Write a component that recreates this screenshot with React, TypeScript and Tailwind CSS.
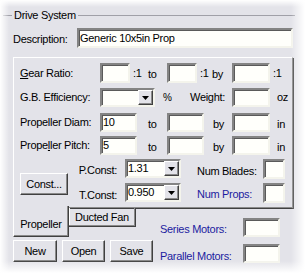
import React from "react";

const sunken =
  "bg-[#fffffb] border-2 border-t-[#848484] border-l-[#848484] border-r-[#f4f4ec] border-b-[#f4f4ec] shadow-[inset_1px_1px_0_#5a5a5a]";
const raised =
  "bg-[#e3e3e9] border border-t-white border-l-white border-r-[#404040] border-b-[#404040] shadow-[inset_-1px_-1px_0_#8a8a8a]";

const Box = ({ w, h = 20, value }: { w: number; h?: number; value?: string }) => (
  <div className={`${sunken} shrink-0 flex items-center pl-[1px] leading-none`} style={{ width: w, height: h }}>
    {value}
  </div>
);

const Combo = ({ w, value }: { w: number; value?: string }) => (
  <div className={`${sunken} shrink-0 h-[19px] flex items-center justify-between`} style={{ width: w }}>
    <span className="pl-[1px] leading-none">{value}</span>
    <div className={`${raised} w-[15px] h-full flex items-center justify-center`}>
      <svg width="7" height="4" viewBox="0 0 7 4">
        <path d="M0 0h7L3.5 4z" fill="#000" />
      </svg>
    </div>
  </div>
);

const Btn = ({ children, w }: { children: React.ReactNode; w: number }) => (
  <div className={`${raised} h-[22px] flex items-center justify-center`} style={{ width: w }}>
    {children}
  </div>
);

const Low = ({ children, w, pl }: { children: React.ReactNode; w: number; pl: number }) => (
  <span className="shrink-0 self-end pb-[1px]" style={{ width: w, paddingLeft: pl }}>
    {children}
  </span>
);

const Label = ({ children }: { children: React.ReactNode }) => (
  <span className="w-[86px] shrink-0 pl-[6px]">{children}</span>
);

export default function App() {
  return (
    <div className="relative w-[305px] h-[273px] overflow-hidden bg-[#e3e3e9] text-black text-[11px] tracking-[-0.3px] font-['Liberation_Sans',Arial,sans-serif]">
      {/* group caption */}
      <div className="flex items-center pt-[9px] pl-[3px] pr-[10px] h-[21px]">
        <div className="w-[9px] h-px bg-[#a0a0a8]" />
        <span className="px-[2px] leading-none">Drive System</span>
        <div className="flex-1 h-px bg-[#a0a0a8]" />
      </div>

      <div className="flex items-center mt-[7px] pl-[13px]">
        <span className="w-[64px] shrink-0 pt-[3px]">Description:</span>
        <Box w={216} value="Generic 10x5in Prop" />
      </div>

      <div className="ml-[13px] mt-[9px] w-[280px] h-[151px] border border-t-white border-l-white border-r-[#8a8a8a] border-b-[#8a8a8a] shadow-[1px_1px_0_#404040] pt-[5px] flex flex-col">
        <div className="flex items-center h-[20px]">
          <Label>
            <u>G</u>ear Ratio:
          </Label>
          <Box w={30} />
          <span className="w-[16px] pl-[3px] shrink-0 self-start pt-[2px]">:1</span>
          <Low w={21} pl={2}>to</Low>
          <Box w={30} />
          <span className="w-[13px] pl-[3px] shrink-0 self-start pt-[2px]">:1</span>
          <Low w={22} pl={2}>by</Low>
          <Box w={38} />
          <span className="pl-[3px] self-start pt-[2px]">:1</span>
        </div>

        <div className="flex items-center h-[19px] mt-[5px]">
          <Label>G.B. Efficiency:</Label>
          <Combo w={55} />
          <span className="w-[35px] pl-[8px] shrink-0 text-[10px]">%</span>
          <span className="w-[42px] shrink-0">Weight:</span>
          <Box w={38} h={19} />
          <span className="pl-[7px]">oz</span>
        </div>

        <div className="flex items-center h-[19px] mt-[6px]">
          <Label>Propeller Diam:</Label>
          <Box w={37} h={19} value="10" />
          <span className="w-[30px] pl-[11px] shrink-0 pt-[3px]">to</span>
          <Box w={37} h={19} />
          <span className="w-[28px] pl-[9px] shrink-0 pt-[3px]">by</span>
          <Box w={38} h={19} />
          <span className="pl-[7px] pt-[3px]">in</span>
        </div>

        <div className="flex items-center h-[19px] mt-[4px]">
          <Label>
            Prope<u>l</u>ler Pitch:
          </Label>
          <Box w={37} h={19} value="5" />
          <span className="w-[30px] pl-[11px] shrink-0 pt-[3px]">to</span>
          <Box w={37} h={19} />
          <span className="w-[28px] pl-[9px] shrink-0 pt-[3px]">by</span>
          <Box w={38} h={19} />
          <span className="pl-[7px] pt-[3px]">in</span>
        </div>

        <div className="flex mt-[4px]">
          <div className="pl-[6px] pt-[14px]">
            <Btn w={48}>Const...</Btn>
          </div>
          <div className="flex flex-col gap-[5px]">
            <div className="flex items-center h-[19px]">
              <span className="w-[49px] text-right shrink-0 pt-[4px]">P.Const:</span>
              <div className="w-[8px]" />
              <Combo w={56} value="1.31" />
              <div className="w-[16px]" />
              <span className="w-[66px] shrink-0 pt-[6px]">Num Blades:</span>
              <Box w={22} />
            </div>
            <div className="flex items-center h-[19px]">
              <span className="w-[49px] text-right shrink-0 pt-[6px]">T.Const:</span>
              <div className="w-[8px]" />
              <Combo w={56} value="0.950" />
              <div className="w-[16px]" />
              <span className="w-[66px] shrink-0 pt-[4px] text-[#1c1ca0]">Num Props:</span>
              <Box w={22} />
            </div>
          </div>
        </div>
      </div>

      <div className="flex">
        <div className="w-[160px] shrink-0 pl-[13px]">
          <div className="flex items-start">
            <div className="relative z-10 -mt-[2px] bg-[#e3e3e9] w-[56px] h-[31px] border-l border-l-white border-r border-r-[#404040] border-b border-b-[#404040] shadow-[inset_-1px_-1px_0_#8a8a8a] flex items-end justify-center pb-[4px]">
              Propeller
            </div>
            <div className="w-[67px] h-[19px] border-r border-r-[#404040] border-b border-b-[#404040] shadow-[inset_-1px_-1px_0_#8a8a8a,inset_1px_0_0_white] flex items-center justify-center">
              Ducted Fan
            </div>
          </div>
          <div className="flex gap-[5px] mt-[3px]">
            <Btn w={44}>New</Btn>
            <Btn w={43}>Open</Btn>
            <Btn w={43}>Save</Btn>
          </div>
        </div>
        <div className="flex flex-col pt-[10px] gap-[5px] text-[#1c1ca0]">
          <div className="flex items-center">
            <span className="w-[83px] shrink-0 pt-[3px]">Series Motors:</span>
            <Box w={37} h={19} />
          </div>
          <div className="flex items-center">
            <span className="w-[83px] shrink-0 pt-[5px]">Parallel Motors:</span>
            <Box w={37} h={19} />
          </div>
        </div>
      </div>

      {/* soft white fade round the edges of the shot */}
      <div className="pointer-events-none absolute inset-y-0 left-0 w-[9px] bg-linear-to-r from-white to-transparent" />
      <div className="pointer-events-none absolute inset-y-0 right-0 w-[14px] bg-linear-to-l from-white to-transparent" />
      <div className="pointer-events-none absolute inset-x-0 bottom-0 h-[12px] bg-linear-to-t from-white to-transparent" />
      <div className="pointer-events-none absolute inset-x-0 top-0 h-[7px] bg-linear-to-b from-white to-transparent" />
    </div>
  );
}
